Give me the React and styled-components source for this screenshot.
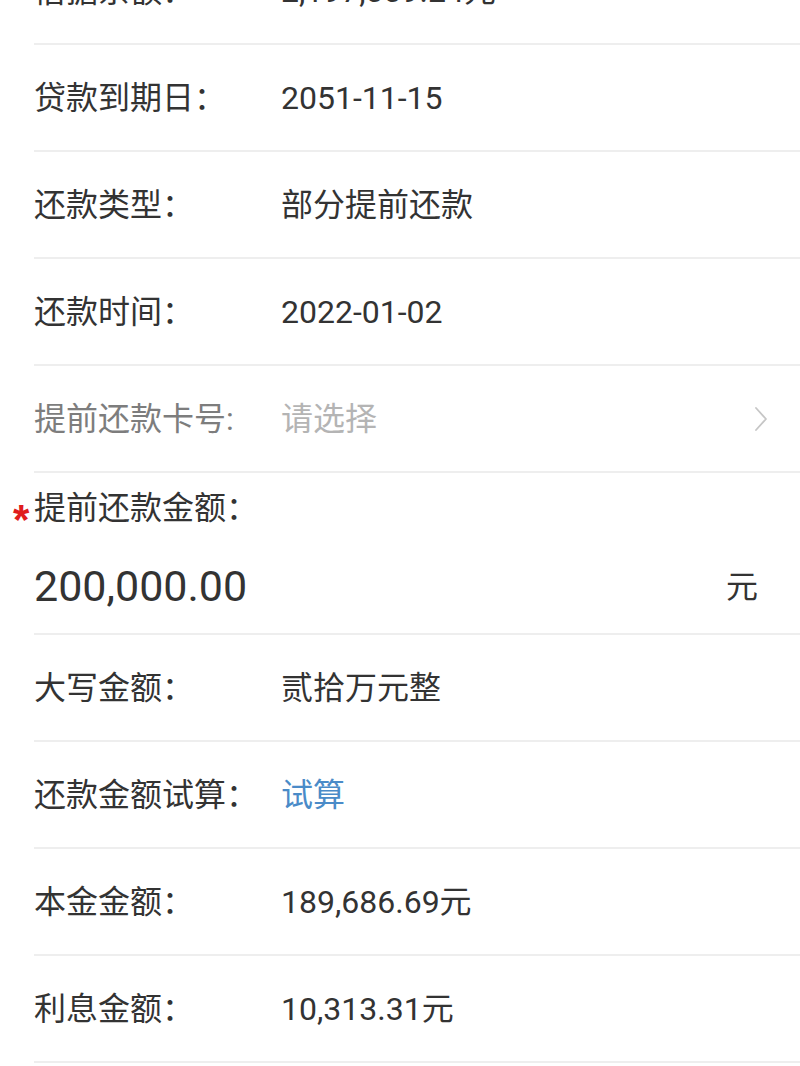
import React from "react";
import styled, { createGlobalStyle } from "styled-components";

const Global = createGlobalStyle`
  html, body { margin: 0; padding: 0; background: #ffffff; }
  body {
    font-family: Roboto, "Noto Sans CJK SC", "Noto Sans", sans-serif;
    color: #333333;
    overflow: hidden;
  }
`;

const Page = styled.div`
  margin-top: -62px;
  display: flex;
  flex-direction: column;
`;

const Row = styled.div`
  margin-left: 34px;
  height: 105px;
  border-bottom: 2px solid #eeeeee;
  display: flex;
  align-items: center;
  padding-right: 32px;
  font-size: 32px;
  line-height: 1;
`;

const Label = styled.div`
  width: 247px;
  flex: none;
  color: ${(p) => (p.$muted ? "#7d7d7d" : "#333333")};
  white-space: nowrap;
`;

const Value = styled.div`
  flex: 1;
  white-space: nowrap;
  color: ${(p) =>
    p.$tone === "link" ? "#4a8bc8" : p.$tone === "placeholder" ? "#b4b4b4" : "#333333"};
`;

const Chevron = styled.svg`
  width: 14px;
  height: 26px;
  flex: none;
`;

const AmountBlock = styled.div`
  position: relative;
  margin-left: 34px;
  height: 160px;
  border-bottom: 2px solid #eeeeee;
  display: flex;
  flex-direction: column;
  padding-right: 42px;
`;

const AmountLabel = styled.div`
  font-size: 32px;
  line-height: 1;
  padding-top: 19px;
  color: #333333;
`;

const Star = styled.span`
  position: absolute;
  left: -21px;
  top: 26px;
  color: #e01d1d;
  font-size: 42px;
  line-height: 1;
  font-family: "Liberation Sans", sans-serif;
  font-weight: bold;
`;

const AmountLine = styled.div`
  flex: 1;
  display: flex;
  align-items: center;
  justify-content: space-between;
  padding-top: 16px;
`;

const AmountValue = styled.div`
  font-size: 43px;
  line-height: 1;
  color: #333333;
`;

const Unit = styled.div`
  font-size: 32px;
  line-height: 1;
  color: #333333;
`;

const topRows = [
  { label: "借据余额：", value: "2,197,009.24元" },
  { label: "贷款到期日：", value: "2051-11-15" },
  { label: "还款类型：", value: "部分提前还款" },
  { label: "还款时间：", value: "2022-01-02" },
];

const bottomRows = [
  { label: "大写金额：", value: "贰拾万元整" },
  { label: "还款金额试算：", value: "试算", tone: "link" },
  { label: "本金金额：", value: "189,686.69元" },
  { label: "利息金额：", value: "10,313.31元" },
];

export default function App() {
  return (
    <>
      <Global />
      <Page>
        {topRows.map((r) => (
          <Row key={r.label}>
            <Label>{r.label}</Label>
            <Value>{r.value}</Value>
          </Row>
        ))}
        <Row>
          <Label $muted>提前还款卡号:</Label>
          <Value $tone="placeholder">请选择</Value>
          <Chevron viewBox="0 0 14 26" fill="none">
            <polyline points="2,2 12,13 2,24" stroke="#c6c6c6" strokeWidth="1.8" strokeLinecap="round" strokeLinejoin="round" />
          </Chevron>
        </Row>
        <AmountBlock>
          <Star>*</Star>
          <AmountLabel>提前还款金额：</AmountLabel>
          <AmountLine>
            <AmountValue>200,000.00</AmountValue>
            <Unit>元</Unit>
          </AmountLine>
        </AmountBlock>
        {bottomRows.map((r) => (
          <Row key={r.label}>
            <Label>{r.label}</Label>
            <Value $tone={r.tone}>{r.value}</Value>
          </Row>
        ))}
      </Page>
    </>
  );
}
